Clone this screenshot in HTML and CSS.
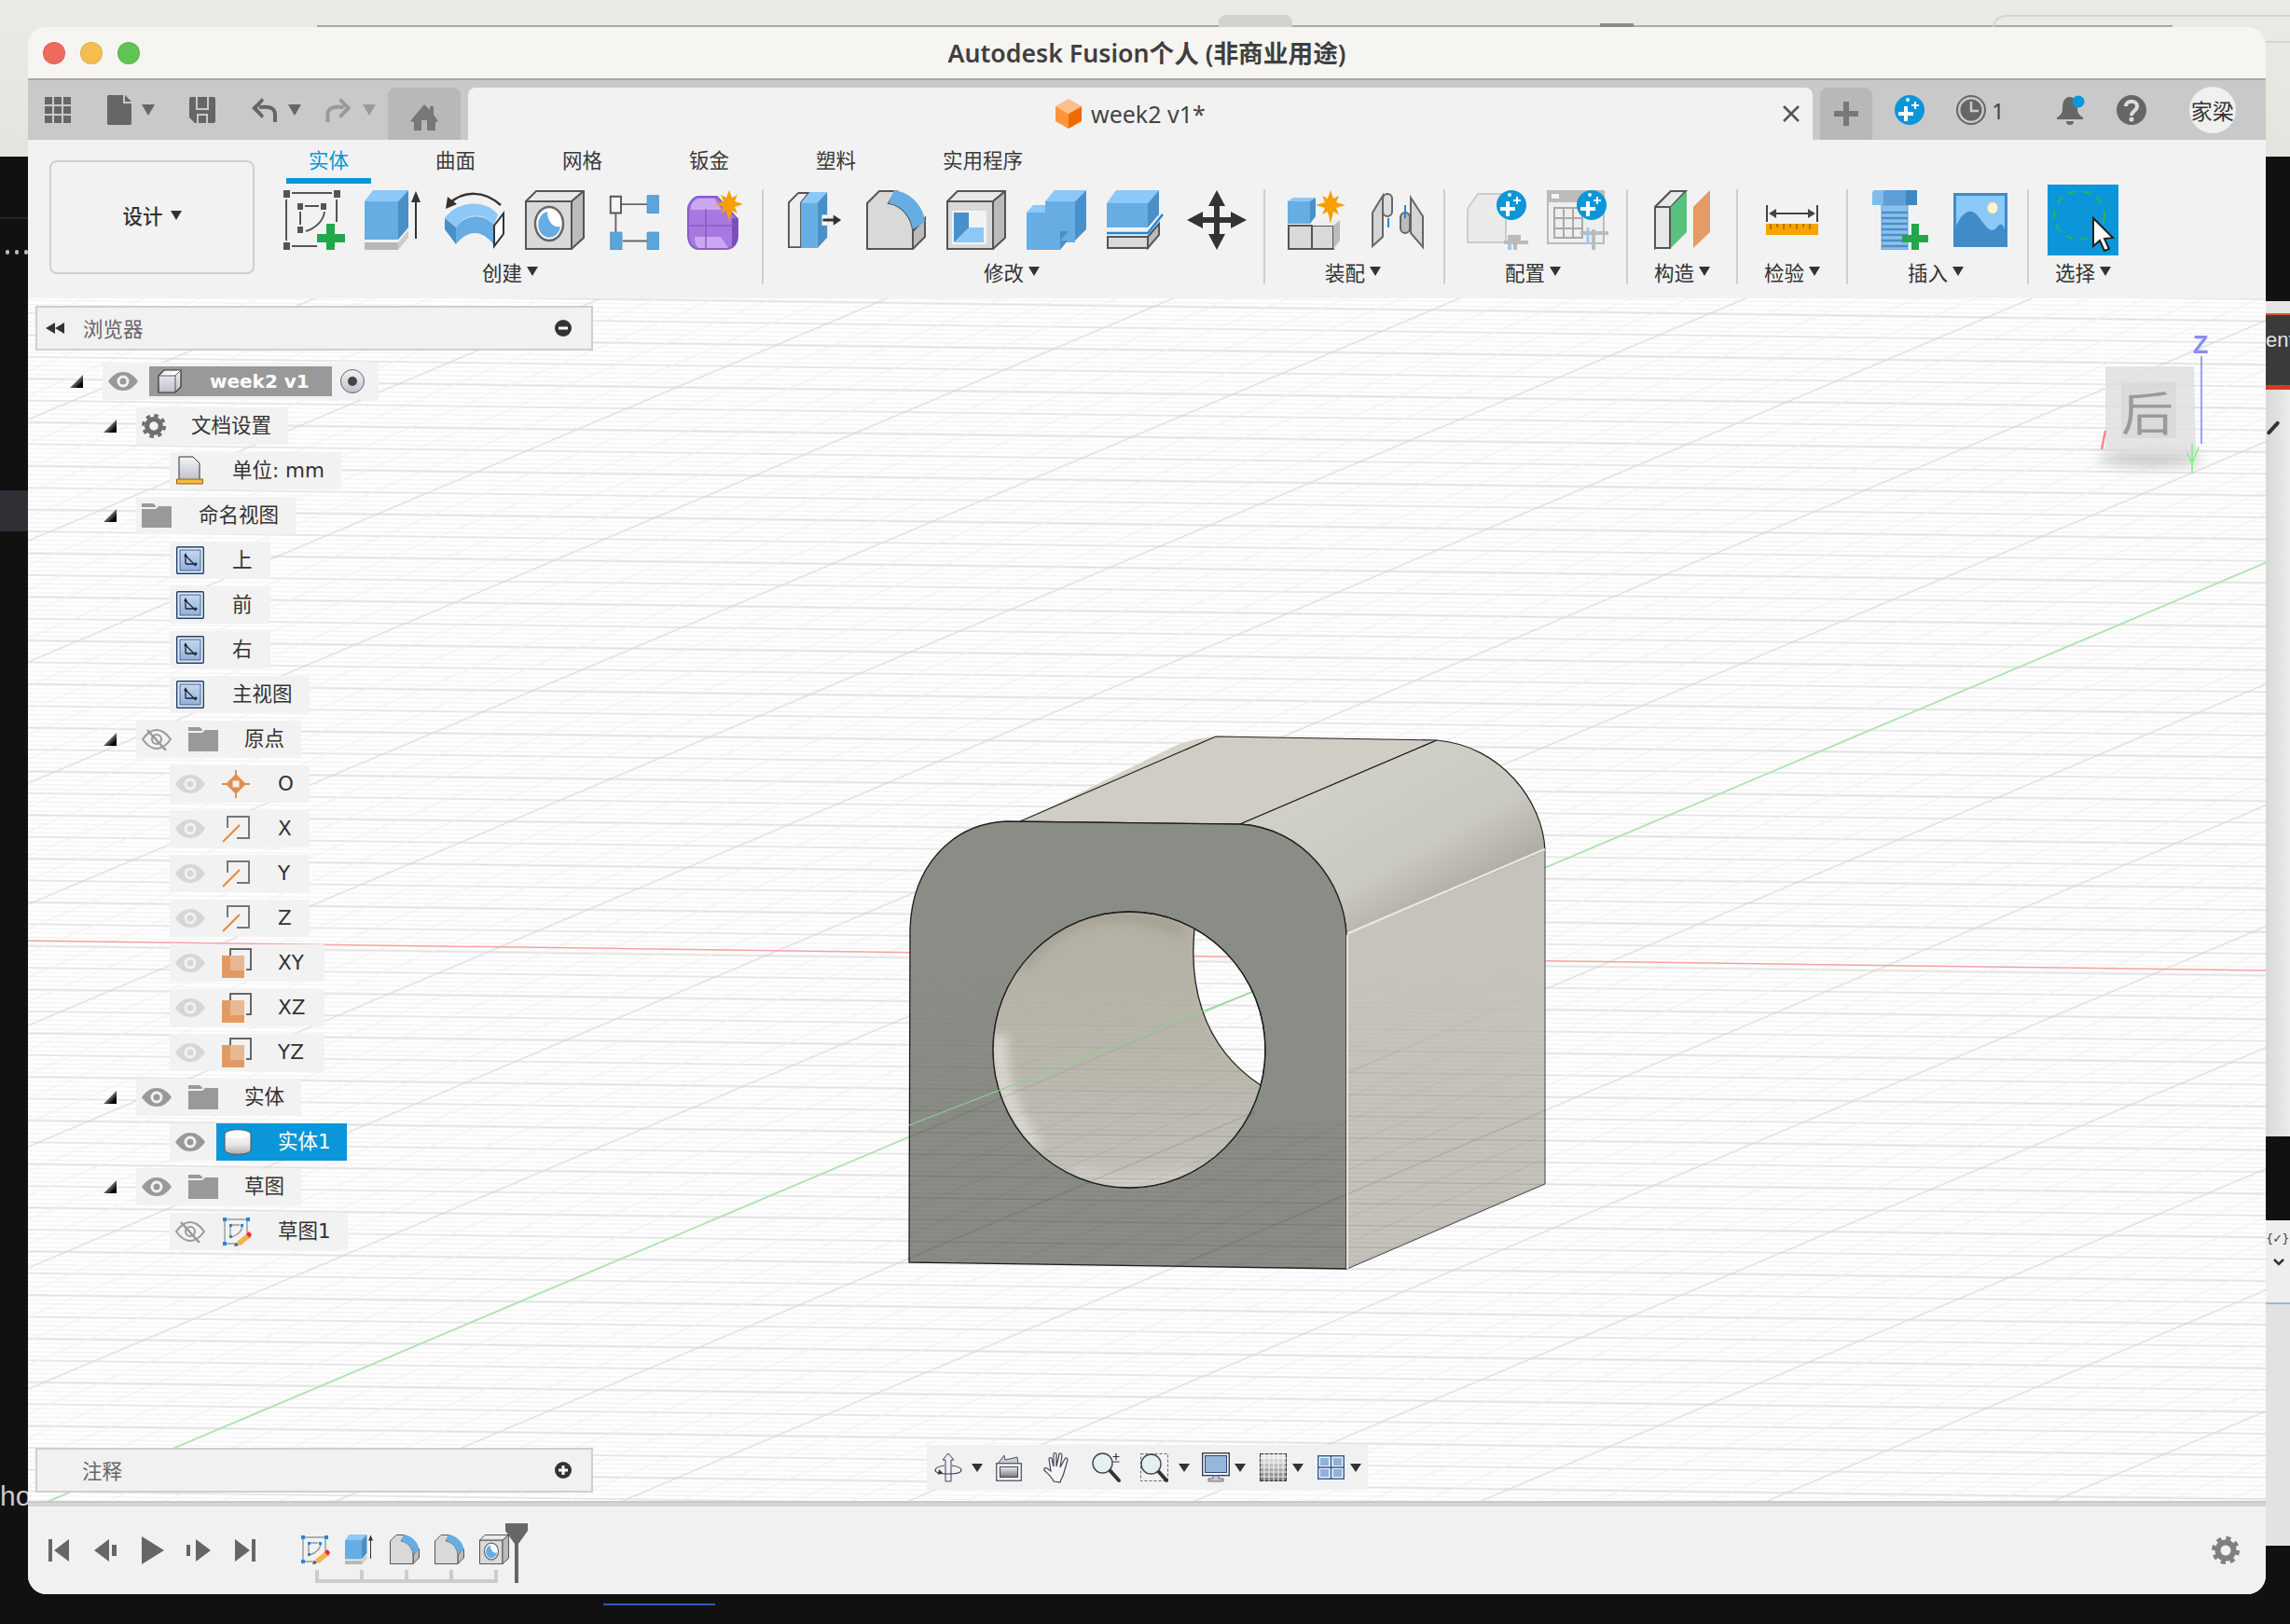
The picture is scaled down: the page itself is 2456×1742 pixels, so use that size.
FILE: index.html
```html
<!DOCTYPE html>
<html lang="zh">
<head>
<meta charset="utf-8">
<title>Autodesk Fusion</title>
<link rel="stylesheet" href="styles.css">
</head>
<body>
<svg class="sprite" width="0" height="0">
<defs>
<linearGradient id="gMetal" x1="0" y1="0" x2="0" y2="1"><stop offset="0" stop-color="#f4f5f8"/><stop offset="1" stop-color="#bcc0ca"/></linearGradient>
<linearGradient id="gBlueTile" x1="0" y1="0" x2="0" y2="1"><stop offset="0" stop-color="#c6d8ee"/><stop offset="1" stop-color="#8fb2dc"/></linearGradient>
<linearGradient id="gDark" x1="0" y1="0" x2="0" y2="1"><stop offset="0" stop-color="#eee"/><stop offset="1" stop-color="#777"/></linearGradient>
<linearGradient id="gCyl" x1="0" y1="0" x2="0" y2="1"><stop offset="0" stop-color="#fff"/><stop offset=".6" stop-color="#e8e8e8"/><stop offset="1" stop-color="#aaa"/></linearGradient>
</defs>
<symbol id="i-sketch" viewBox="0 0 66 64"><g fill="#555"><rect width="7" height="8"/><rect x="54" width="7" height="8"/><rect y="56" width="7" height="8"/><rect x="15" y="14" width="6" height="7"/><rect x="40" y="14" width="6" height="7"/><rect x="15" y="39" width="6" height="7"/></g><path fill="none" stroke="#555" stroke-width="2" d="M9 3H52M3 10V54M57 10V34M9 60H36M18 23V37M23 17H38M44 23C43 33 34 41 24 44"/><path fill="#21a84b" d="M46 36h9v11h11v9H55v8h-9v-8H36v-9h10z"/></symbol>
<symbol id="i-extrude" viewBox="0 0 64 64"><path fill="#66ade3" d="M0 12h36v41H0z"/><path fill="#8cc8f8" d="M0 12 9 0h38L36 12z"/><path fill="#4a90c8" d="M36 12 47 0v40L36 53z"/><path fill="#b8b8b8" d="M0 56h36v8H0z"/><path fill="#ccc" d="m36 56 11-13v8L36 64z"/><path stroke="#333" stroke-width="2" d="M55 10v42"/><path fill="#333" d="m50 13 5-12 5 12z"/></symbol>
<symbol id="i-revolve" viewBox="0 0 64 64"><path fill="none" stroke="#333" stroke-width="2.5" d="M4 15C20 0 42 0 60 16"/><path fill="#333" d="m1 20 2-13 10 8z"/><path fill="#8cc8f8" d="M0 30C14 10 44 10 57 26l-4 11C42 24 22 24 12 40z"/><path fill="#66ade3" d="M12 40C22 25 42 25 53 37v22C40 42 25 42 12 58z"/><path fill="#4a90c8" d="m0 30 12 10v18L0 42z"/><path fill="#fff" stroke="#333" stroke-width="2" d="m53 38 10-13v22L53 60z"/></symbol>
<symbol id="i-hole" viewBox="0 0 64 64"><path fill="#d9d9d9" stroke="#555" stroke-width="2" d="M1 12h49v51H1z"/><path fill="#e8e8e8" stroke="#555" stroke-width="2" d="M1 12 12 1h51L50 12z"/><path fill="#bbb" stroke="#555" stroke-width="2" d="M50 12 63 1v50L50 63z"/><ellipse cx="26" cy="36" rx="15" ry="18" fill="#fff" stroke="#666" stroke-width="2.5"/><path fill="#66ade3" d="M24 23a12 14 0 1 0 14 16c-8 2-14-6-14-16z"/></symbol>
<symbol id="i-form" viewBox="0 0 64 64"><path fill="none" stroke="#666" stroke-width="2" d="M16 14h30M10 24v22M18 56h28"/><path fill="#f4f4f4" stroke="#555" stroke-width="2" d="M4 5h12v19H4z"/><g fill="#5aa6dc" stroke="#4a90c8"><path d="M46 4h13v20H46zM4 46h13v20H4zM46 46h13v20H46z"/></g></symbol>
<symbol id="i-pform" viewBox="0 0 64 64"><path fill="#a678e0" stroke="#8a5cc8" stroke-width="2" d="M3 20c0-5 6-13 11-13h20l22 24v18c0 8-5 14-13 14H14C7 63 3 56 3 49z"/><path fill="#c9a8f0" d="M6 18c1-5 5-9 9-9h16l8 12H6zM10 50h28l8 12H15c-3 0-5-6-5-12z"/><path fill="#7a50b8" d="M50 30h6v20c0 6-3 10-6 12z"/><path fill="none" stroke="#8a5cc8" stroke-width="1.5" d="M4 38h48M22 20v42"/><path fill="#f5a000" d="m47 0 3 8 6-3-3 7 9 3-9 3 3 7-6-3-3 12-3-12-6 3 3-7-9-3 9-3-3-7 6 3z"/></symbol>
<symbol id="i-press" viewBox="0 0 64 64"><path fill="#eee" stroke="#555" stroke-width="2" d="M1 63V12L12 1h12l-9 11v51z"/><path fill="#66ade3" d="M15 12h19v52H15z"/><path fill="#8cc8f8" d="M15 12 25 0h20L34 12z"/><path fill="#4a90c8" d="M34 12 45 0v52L34 64z"/><path fill="#fff" d="M39 26h6v12h-6z"/><path stroke="#333" stroke-width="3" d="M40 32h15"/><path fill="#333" d="m52 26 9 6-9 6z"/></symbol>
<symbol id="i-fillet" viewBox="0 0 64 64"><path fill="#bbb" stroke="#555" stroke-width="2" d="m50 44 13-14v20L50 63z"/><path fill="#d9d9d9" stroke="#555" stroke-width="2" d="M1 63V14L14 1h18l-8 13c14 2 24 14 26 28v21z"/><path fill="#66ade3" d="M30 0c18 2 32 18 33 34L50 42C48 28 38 16 24 14z"/></symbol>
<symbol id="i-shell" viewBox="0 0 64 64"><path fill="#d9d9d9" stroke="#555" stroke-width="2" d="M1 12h49v51H1z"/><path fill="#e8e8e8" stroke="#555" stroke-width="2" d="M1 12 12 1h51L50 12z"/><path fill="#bbb" stroke="#555" stroke-width="2" d="M50 12 63 1v50L50 63z"/><path fill="#f2f2f2" d="M6 22h37v36H6z"/><path fill="#4a90c8" d="M8 24h16v22L8 56z"/><path fill="#8cc8f8" d="m8 56 16-16h16v16z"/></symbol>
<symbol id="i-combine" viewBox="0 0 64 64"><path fill="#66ade3" d="M20 12h32v44H20z"/><path fill="#8cc8f8" d="M20 12 30 0h34L52 12z"/><path fill="#4a90c8" d="M52 12 64 0v42L52 54z"/><path fill="#66ade3" d="M0 24h36v40H0z"/><path fill="#8cc8f8" d="m0 24 7-8h13v8z"/><path fill="#4a90c8" d="m36 54 9-10H36zM36 64V54h8z"/></symbol>
<symbol id="i-offset" viewBox="0 0 64 64"><path fill="#66ade3" d="M0 14h44v26H0z"/><path fill="#8cc8f8" d="M0 14 10 0h46L44 14z"/><path fill="#4a90c8" d="M44 14 56 0v26L44 40z"/><path fill="#d9d9d9" stroke="#555" stroke-width="2" d="M1 50h43v12H1z"/><path fill="#bbb" stroke="#555" stroke-width="2" d="M44 50 56 36v12L44 62z"/><path fill="none" stroke="#1e88e0" stroke-width="2.5" d="M-4 46h48l16-20"/></symbol>
<symbol id="i-move" viewBox="0 0 64 64"><path fill="#333" d="M32 0 41 17H35V29H47V23L64 32 47 41V35H35V47H41L32 64 23 47H29V35H17V41L0 32 17 23V29H29V17H23z"/></symbol>
<symbol id="i-newcomp" viewBox="0 0 64 64"><path fill="#66ade3" d="M0 12h24v24H0z"/><path fill="#8cc8f8" d="M0 12 6 8h24l-6 4z"/><path fill="#4a90c8" d="m24 12 6-4v20l-6 8z"/><path fill="#d9d9d9" stroke="#555" stroke-width="2" d="M1 38h25v25H1zM26 38h23v25H26z"/><path fill="#bbb" d="m49 38 7-6v22l-7 9z"/><path fill="#eee" d="m26 38 8-6h22l-7 6z"/><path fill="#f5a000" d="m46 0 3 9 6-3-3 7 10 3-10 3 3 7-6-3-3 13-3-13-6 3 3-7-10-3 10-3-3-7 6 3z"/></symbol>
<symbol id="i-joint" viewBox="0 0 56 64"><path fill="#d5d5d5" stroke="#666" stroke-width="2" d="m1 50 0-26L12 6v44L1 60z"/><path fill="#d5d5d5" stroke="#666" stroke-width="2" d="M42 8 55 28v33L42 46z"/><rect x="12" y="4" width="10" height="24" rx="5" fill="#ddd" stroke="#666" stroke-width="2"/><rect x="31" y="24" width="10" height="22" rx="5" fill="#bbb" stroke="#666" stroke-width="2"/><path stroke="#1e88e0" stroke-width="2" d="M18 30v10M36 16v14"/></symbol>
<symbol id="i-spark" viewBox="0 0 32 32"><circle cx="16" cy="16" r="16" fill="#0a96d8"/><path fill="#fff" d="M10 12h4v6h6v4h-6v6h-4v-6H4v-4h6z"/><path fill="#fff" d="M21 7h2v3h3v2h-3v3h-2v-3h-3v-2h3z"/><circle cx="14" cy="5" r="2" fill="#fff"/></symbol>
<symbol id="i-config1" viewBox="0 0 66 64"><path fill="#eaeaea" stroke="#ccc" stroke-width="2" d="M1 20 12 4h30v52H1z"/><rect x="44" y="48" width="14" height="6" fill="#bbb"/><rect x="44" y="56" width="4" height="8" fill="#9cc9ef"/><path stroke="#bbb" stroke-width="4" d="M40 56h26M52 50v14"/><use href="#i-spark" x="32" y="0" width="32" height="32"/></symbol>
<symbol id="i-config2" viewBox="0 0 66 64"><path fill="#eee" stroke="#bbb" stroke-width="2" d="M1 1h60v56H1z"/><path fill="#bbb" d="M1 1h60v12H1z"/><path fill="#f4f4f4" d="M5 4h8v5H5z"/><path fill="none" stroke="#aaa" stroke-width="2" d="M8 19h30v32H8zM8 30h30M8 41h30M18 19v32M28 19v32"/><path stroke="#bbb" stroke-width="4" d="M36 46h30M50 42v22"/><path stroke="#9cc9ef" stroke-width="3" d="M44 40v18"/><use href="#i-spark" x="32" y="0" width="32" height="32"/></symbol>
<symbol id="i-plane" viewBox="0 0 60 64"><path fill="#d9d9d9" stroke="#555" stroke-width="2" d="M1 62V18L18 1v44z"/><path fill="#e8e8e8" stroke="#555" stroke-width="2" d="M1 18 18 1h16L18 18zM1 62h16V18H1z"/><path fill="#58c27d" d="M18 18 35 1v44L18 62z"/><path fill="#e69a66" d="M42 40V18L60 0v45L42 62z"/></symbol>
<symbol id="i-measure" viewBox="0 0 56 38"><path fill="none" stroke="#444" stroke-width="2" d="M1 0v18M55 0v18M6 9h44"/><path fill="#444" d="m3 9 8-5v10zM53 9l-8-5v10z"/><path fill="#f5a400" d="M0 20h56v12H0z"/><path stroke="#a06800" stroke-width="1.5" d="M5 20v6M12 20v4M19 20v6M26 20v4M33 20v6M40 20v4M47 20v6"/></symbol>
<symbol id="i-bolt" viewBox="0 0 60 64"><path fill="#5d9fd8" d="M0 4q0-4 4-4h44l0 16H0z"/><path fill="#82bbec" d="M0 4q0-4 4-4h8v16H0z"/><path fill="#3f86c2" d="M36 0h12v16H36z"/><path fill="#8cc0ea" stroke="#5d9fd8" stroke-width="1" d="M10 16h28v48H10z"/><path stroke="#4a90c8" stroke-width="2.5" d="M10 24h28M10 30h28M10 36h28M10 42h28M10 48h28M10 54h28M10 60h28"/><path fill="#21a84b" d="M42 36h8v12h10v8H50v8h-8v-8H32v-8h10z"/></symbol>
<symbol id="i-image" viewBox="0 0 58 58"><path fill="#3f8cc8" d="M0 0h58v58H0z"/><path fill="#8cc8f8" d="M3 3h52v52H3z"/><ellipse cx="42" cy="16" rx="6" ry="6.5" fill="#fff6c8" stroke="#9cc7e8"/><path fill="#3f8cc8" d="M2 56V38c4-12 12-20 18-18 8 2 14 20 22 20 4 0 6-8 10-6 3 2 4 8 4 14v8z"/></symbol>
<symbol id="i-select" viewBox="0 0 76 76"><path fill="#0a96d8" d="M0 0h76v76H0z"/><ellipse cx="34" cy="33" rx="27" ry="26" fill="none" stroke="#2db45a" stroke-width="2" stroke-dasharray="9 7"/><path fill="#fff" stroke="#222" stroke-width="2" d="m49 36 0 30 7-6 5 11 5-2-5-11 9-1z"/></symbol>
<symbol id="i-eye" viewBox="0 0 32 20"><path fill="currentColor" d="M0 10C5 3 10 0 16 0s11 3 16 10c-5 7-10 10-16 10S5 17 0 10z"/><circle cx="16" cy="10" r="6.5" fill="#f2f2f2"/><circle cx="16" cy="10" r="3.5" fill="currentColor"/></symbol>
<symbol id="i-eyeoff" viewBox="0 0 32 24"><path fill="none" stroke="currentColor" stroke-width="2" d="M1 12C6 5 11 2 16 2s10 3 15 10c-5 7-10 10-15 10S6 19 1 12z"/><circle cx="16" cy="12" r="5" fill="none" stroke="currentColor" stroke-width="2"/><path stroke="currentColor" stroke-width="2.5" d="m6 2 20 22"/></symbol>
<symbol id="i-folder" viewBox="0 0 32 26"><path fill="#999" d="M0 4V0h12l3 2.500V4zM0 6h15l3-3h14v23H0z"/></symbol>
<symbol id="i-view" viewBox="0 0 30 30"><rect x=".7" y=".7" width="28.600" height="28.600" rx="1" fill="#e8eef8" stroke="#24406c" stroke-width="1.400"/><rect x="4" y="4" width="22" height="22" fill="url(#gBlueTile)" stroke="#44638f"/><path fill="none" stroke="#223" stroke-width="1.300" d="m10 10 0 9M10 19h12M10 10l11 11"/><path fill="#223" d="m8 11 2-4 2 4zM20 17l3 2-3 2z"/></symbol>
<symbol id="i-origin" viewBox="0 0 30 30"><path stroke="#e08f52" stroke-width="2" d="M15 0v30M0 15h30"/><path fill="#e08f52" d="m15 4 11 11-11 11L4 15z"/><rect x="11.500" y="11.500" width="7" height="7" fill="#f6efe9"/></symbol>
<symbol id="i-axis" viewBox="0 0 30 30"><path fill="none" stroke="#777" stroke-width="2" d="M6 14V2h23v23H16"/><path stroke="#e8883c" stroke-width="2" d="m1 29 18-18"/></symbol>
<symbol id="i-planeT" viewBox="0 0 32 32"><path fill="none" stroke="#666" stroke-width="2" d="M9 8V1h22v22h-5"/><path fill="#e29a62" d="M0 8h24v24H0z"/><path fill="#e6b893" d="M9 8h15v16H9z"/></symbol>
<symbol id="i-cylinder" viewBox="0 0 30 28"><path fill="url(#gCyl)" stroke="#555" d="M1 6c0-7 28-7 28 0v16c0 7-28 7-28 0z"/><ellipse cx="15" cy="6" rx="13" ry="4" fill="#fff"/></symbol>
<symbol id="i-sketchpen" viewBox="0 0 32 32"><path fill="none" stroke="#999" stroke-width="1.400" d="M3 3h25M3 3v26h16M27 3v16M9 9h10M9 9v12M22 9c0 6-5 11-12 13"/><g fill="#1e88e0"><rect x="1" y="1" width="4" height="4"/><rect x="26" y="1" width="4" height="4"/><rect x="1" y="27" width="4" height="4"/><rect x="8" y="8" width="3" height="3"/><rect x="20" y="8" width="3" height="3"/><rect x="8" y="20" width="3" height="3"/></g><path fill="#f4b24a" d="m27 18 4 4-11 9-4-4z"/><path fill="#e8303a" d="m26 19 3-3 3 3-2 4z"/><path fill="#555" d="m15 28 3 3-5 1z"/></symbol>
<symbol id="i-gear" viewBox="0 0 30 30"><circle cx="15" cy="15" r="8.500" fill="none" stroke="currentColor" stroke-width="6"/><circle cx="15" cy="15" r="13" fill="none" stroke="currentColor" stroke-width="4" stroke-dasharray="5.200 5"/></symbol>
<symbol id="i-fwd" viewBox="0 0 24 30"><path fill="#666" d="M0 0 24 15 0 30z"/></symbol>
</svg>

<div class="desk-top"></div>
<div class="desk-other"></div>
<div class="desk-bump"></div>
<div class="desk-mark"></div>
<div class="desk-outline"></div>
<div class="left-line"></div>
<div class="left-hi"></div>
<div class="left-dots"><i></i><i></i><i></i></div>
<div class="left-ho">ho</div>
<div class="blue-line"></div>
<div class="right-dark-tab"><span class="ent">ent</span></div>
<div class="right-panel"><i class="slash"></i></div>
<div class="right-panel2"><span class="curly">{✓}</span><svg class="chev" width="12" height="8" viewBox="0 0 12 8"><path fill="none" stroke="#333" stroke-width="2.500" d="m1 1 5 5 5-5"/></svg></div>

<main class="window">
  <header class="titlebar">
    <div class="lights"><i class="tl red"></i><i class="tl amber"></i><i class="tl green"></i></div>
    <h1 class="title">Autodesk Fusion个人 (非商业用途)</h1>
    <div></div>
  </header>

  <nav class="tabbar">
    <svg class="m18" width="28" height="28" viewBox="0 0 28 28"><path fill="#666" d="M0 0h8v8H0zM10 0h8v8h-8zM20 0h8v8h-8zM0 10h8v8H0zM10 10h8v8h-8zM20 10h8v8h-8zM0 20h8v8H0zM10 20h8v8h-8zM20 20h8v8h-8z"/></svg>
    <svg class="m39" width="26" height="32" viewBox="0 0 26 32"><path fill="#666" d="M1 0h16v9h9v22l-1 1H1l-1-1V1zM19 0l7 7h-7z"/></svg>
    <i class="caret cq m11"></i>
    <svg class="m37" width="28" height="28" viewBox="0 0 28 28"><path fill="#666" d="M2 0h24q2 0 2 2v24q0 2-2 2H6l-6-6V2q0-2 2-2z"/><path fill="none" stroke="#c9c9c9" stroke-width="2" d="M8 0v13h12V0M9 28V19h10v9"/></svg>
    <svg class="m39" width="27" height="26" viewBox="0 0 27 26"><path fill="none" stroke="#666" stroke-width="4" d="M25 26V18C25 10 18 9 8 10"/><path fill="#666" d="M11 0 0 11l11 11 2-3-7-8 7-8z"/></svg>
    <i class="caret cq m12"></i>
    <svg class="m26" width="28" height="26" viewBox="0 0 27 26"><path fill="none" stroke="#999" stroke-width="4" d="M2 26V18C2 10 9 9 19 10"/><path fill="#999" d="M16 0l11 11-11 11-2-3 7-8-7-8z"/></svg>
    <i class="caret cq cq-dim m12"></i>
    <div class="tab-home m13"><svg width="30" height="28" viewBox="0 0 30 28"><path fill="#777" d="M15 0l6 6V2h4v9l5 7-3 1v9H18V17h-6v11H4v-9l-4-1z"/></svg></div>
    <div class="tab-file m8">
      <svg width="28" height="32" viewBox="0 0 28 32"><path fill="#ffbe8c" d="M14 0 28 8 14 16 0 8z"/><path fill="#ff9438" d="M0 8l14 8v16L0 24z"/><path fill="#f06a00" d="m28 8-14 8v16l14-8z"/></svg>
      <span class="tab-name">week2 v1*</span>
      <svg class="tab-close" width="18" height="18" viewBox="0 0 18 18"><path stroke="#555" stroke-width="2.500" d="m1 1 16 16M17 1 1 17"/></svg>
    </div>
    <div class="tab-plus m8"><svg width="26" height="26" viewBox="0 0 26 26"><path fill="#777" d="M10 0h6v10h10v6H16v10h-6V16H0v-6h10z"/></svg></div>
    <svg class="m24" width="32" height="32"><use href="#i-spark"/></svg>
    <svg class="m34" width="32" height="32" viewBox="0 0 32 32"><circle cx="16" cy="16" r="15" fill="#c9c9c9" stroke="#666" stroke-width="2"/><circle cx="16" cy="16" r="11.500" fill="#666"/><path fill="none" stroke="#ccc" stroke-width="2.500" d="M16 7v10h8"/></svg>
    <span class="hist">1</span>
    <svg class="m56" width="28" height="32" viewBox="0 0 28 32"><path fill="#666" d="M14 2c6 0 8 6 8 12 0 5 2 8 6 10v2H0v-2c4-2 6-5 6-10 0-6 2-12 8-12zM10 28h8c0 3-2 4-4 4s-4-1-4-4z"/><circle cx="23" cy="7" r="6.500" fill="#0a96d8"/></svg>
    <svg class="m36" width="32" height="32" viewBox="0 0 32 32"><circle cx="16" cy="16" r="16" fill="#666"/><path fill="none" stroke="#ddd" stroke-width="4" d="M10 12c0-7 12-7 12 0 0 5-6 5-6 10"/><circle cx="16" cy="26" r="2.500" fill="#ddd"/></svg>
    <div class="avatar m46">家梁</div>
  </nav>

  <section class="ribbon">
    <div class="design"><span>设计</span><i class="caret c-lg"></i></div>
    <div class="ribbon-main">
      <div class="tabs">
        <span class="rtab on">实体</span><span class="rtab">曲面</span><span class="rtab">网格</span><span class="rtab">钣金</span><span class="rtab">塑料</span><span class="rtab">实用程序</span>
      </div>
      <div class="groups">
        <div class="group g1"><div class="tools">
          <span class="tool"><svg width="66" height="64"><use href="#i-sketch"/></svg></span>
          <span class="tool"><svg width="64" height="64"><use href="#i-extrude"/></svg></span>
          <span class="tool"><svg width="64" height="64"><use href="#i-revolve"/></svg></span>
          <span class="tool"><svg width="64" height="64"><use href="#i-hole"/></svg></span>
          <span class="tool"><svg width="60" height="64"><use href="#i-form"/></svg></span>
          <span class="tool"><svg width="64" height="64"><use href="#i-pform"/></svg></span>
        </div><div class="glabel shift">创建<i class="caret"></i></div></div>
        <div class="group g2"><div class="tools">
          <span class="tool"><svg width="60" height="64"><use href="#i-press"/></svg></span>
          <span class="tool"><svg width="64" height="64"><use href="#i-fillet"/></svg></span>
          <span class="tool"><svg width="64" height="64"><use href="#i-shell"/></svg></span>
          <span class="tool"><svg width="64" height="64"><use href="#i-combine"/></svg></span>
          <span class="tool"><svg width="64" height="64"><use href="#i-offset"/></svg></span>
          <span class="tool"><svg width="64" height="64"><use href="#i-move"/></svg></span>
        </div><div class="glabel shift">修改<i class="caret"></i></div></div>
        <div class="group g3"><div class="tools">
          <span class="tool"><svg width="64" height="64"><use href="#i-newcomp"/></svg></span>
          <span class="tool"><svg width="56" height="64"><use href="#i-joint"/></svg></span>
        </div><div class="glabel shift">装配<i class="caret"></i></div></div>
        <div class="group g4"><div class="tools">
          <span class="tool"><svg width="66" height="64"><use href="#i-config1"/></svg></span>
          <span class="tool"><svg width="66" height="64"><use href="#i-config2"/></svg></span>
        </div><div class="glabel shift">配置<i class="caret"></i></div></div>
        <div class="group g5"><div class="tools">
          <span class="tool"><svg width="60" height="64"><use href="#i-plane"/></svg></span>
        </div><div class="glabel">构造<i class="caret"></i></div></div>
        <div class="group g6"><div class="tools">
          <span class="tool tool-measure"><svg width="56" height="38"><use href="#i-measure"/></svg></span>
        </div><div class="glabel">检验<i class="caret"></i></div></div>
        <div class="group g7"><div class="tools">
          <span class="tool"><svg width="60" height="64"><use href="#i-bolt"/></svg></span>
          <span class="tool tool-image"><svg width="58" height="58"><use href="#i-image"/></svg></span>
        </div><div class="glabel shift">插入<i class="caret"></i></div></div>
        <div class="group g8"><div class="tools">
          <span class="tool tool-select"><svg width="76" height="76"><use href="#i-select"/></svg></span>
        </div><div class="glabel">选择<i class="caret"></i></div></div>
      </div>
    </div>
  </section>

  <section class="viewport">
    <svg class="scene" viewBox="30 320 2400 1290" width="2400" height="1290">
      <defs>
        <pattern id="pH" patternUnits="userSpaceOnUse" width="200" height="46.800" patternTransform="rotate(0.76)">
          <rect width="200" height="46.800" fill="#fff"/>
          <g stroke="#f2f2f2" stroke-width="1.200"><path d="M0 12.700h200M0 17.400h200M0 22.100h200M0 26.800h200M0 36.100h200M0 40.800h200M0 45.500h200M0 3.400h200"/></g>
          <path stroke="#cfcfcf" stroke-width="1" d="M0 8h200"/><path stroke="#e0e0e0" stroke-width="2" d="M0 31.400h200"/>
        </pattern>
        <pattern id="pD" patternUnits="userSpaceOnUse" width="300" height="119.700" patternTransform="rotate(-22.950)">
          <g stroke="#f0f0f0" stroke-width="1"><path d="M0 19.300h300M0 43.300h300M0 91.100h300M0 115.100h300"/></g>
          <path stroke="#d2d2d2" stroke-width="1" d="M0 67.200h300"/>
        </pattern>
        <pattern id="pT" patternUnits="userSpaceOnUse" width="200" height="23.400" patternTransform="rotate(0.76)">
          <g stroke="#666" stroke-width="1" opacity=".25"><path d="M0 3.300h200M0 12.700h200M0 17.400h200M0 22.100h200"/></g>
          <path stroke="#333" stroke-width="1" opacity=".5" d="M0 8h200"/>
        </pattern>
        <pattern id="pTD" patternUnits="userSpaceOnUse" width="300" height="119.700" patternTransform="rotate(-22.950)">
          <g stroke="#555" stroke-width="1" opacity=".25"><path d="M0 19.300h300M0 43.300h300M0 91.100h300M0 115.100h300"/></g>
          <path stroke="#333" stroke-width="1" opacity=".5" d="M0 67.200h300"/>
        </pattern>
        <clipPath id="holeClip"><ellipse cx="1211" cy="1126" rx="146" ry="148"/></clipPath>
        <linearGradient id="curveG" gradientUnits="userSpaceOnUse" x1="1500" y1="800" x2="1590" y2="960"><stop offset="0" stop-color="#d0cfc8"/><stop offset=".6" stop-color="#c9c8c1"/><stop offset="1" stop-color="#aaa89c"/></linearGradient>
        <linearGradient id="insideG" x1="0" y1="0" x2="0" y2="1"><stop offset="0" stop-color="#b3b0a2"/><stop offset=".5" stop-color="#b9b7ab"/><stop offset="1" stop-color="#c4c3bc"/></linearGradient>
        <linearGradient id="thruG" gradientUnits="userSpaceOnUse" x1="0" y1="1040" x2="0" y2="1220"><stop offset="0" stop-color="#000"/><stop offset="1" stop-color="#fff"/></linearGradient>
        <mask id="thruMask" maskUnits="userSpaceOnUse" x="900" y="760" width="800" height="620"><rect x="900" y="760" width="800" height="620" fill="url(#thruG)"/></mask>
        <filter id="cubeShadow" x="-30%" y="-100%" width="160%" height="300%"><feGaussianBlur stdDeviation="7"/></filter>
        <filter id="soft" x="-40%" y="-40%" width="180%" height="180%"><feGaussianBlur stdDeviation="6"/></filter>
      </defs>
      <rect x="30" y="320" width="2400" height="1290" fill="url(#pH)"/>
      <rect x="30" y="320" width="2400" height="1290" fill="url(#pD)"/>
      <path stroke="#f5a3a3" stroke-width="1.500" d="M30 1009 2430 1041"/>
      <path stroke="#a6e8a6" stroke-width="1.500" d="M50 1611 2430 603.500"/>
      <path fill="#d6d4ca" d="M1098 880 1256 802q24-11 48-12l-6 20-180 74z"/>
      <path fill="#cfcdc4" stroke="#222" stroke-width="1.200" d="M1094 881 1304 790 1541 794 1330 884z"/>
      <path fill="url(#curveG)" stroke="#222" stroke-width="1.200" d="M1330 884 1541 794C1610 800 1655 860 1657 912L1444 1003C1442 950 1400 888 1330 884z"/>
      <path fill="#c5c3bb" d="M1444 1003 1657 913V1270L1445 1361z"/>
      <path stroke="#e7e6e2" stroke-width="2.500" d="M1444 1002 1657 911"/>
      <path fill="none" stroke="#444" stroke-width="1" d="M1657 913V1270L1445 1361"/>
      <path fill="#8a8c86" fill-rule="evenodd" stroke="#1f1f1f" stroke-width="1.300" d="M975 1354 976 997C978 930 1020 884 1079 881L1330 884C1396 888 1442 945 1444 1003V1361zM1065 1126A146 148 0 1 0 1357 1126 146 148 0 1 0 1065 1126z"/>
      <g clip-path="url(#holeClip)">
        <path fill="url(#insideG)" d="M1281 997C1276 1050 1285 1120 1352 1164A146 148 0 1 1 1281 997z"/>
        <g filter="url(#soft)">
          <path fill="none" stroke="#a09d90" stroke-width="12" opacity=".8" d="M1095 1040C1120 1005 1145 990 1170 985"/>
          <path fill="none" stroke="#dedcd5" stroke-width="18" opacity=".9" d="M1072 1110C1068 1160 1085 1200 1112 1232"/>
          <path fill="none" stroke="#d6d4cd" stroke-width="12" opacity=".85" d="M1150 1256C1190 1272 1240 1272 1275 1256"/>
          <path fill="none" stroke="#8e8c80" stroke-width="10" opacity=".5" d="M1170 985C1200 978 1240 985 1270 1000"/>
        </g>
        <path fill="none" stroke="#1f1f1f" stroke-width="1.300" d="M1281 997C1276 1050 1285 1120 1352 1164"/>
      </g>
      <g mask="url(#thruMask)" class="thru">
        <path fill="url(#pT)" d="M975 1354 976 1040H1281C1278 1100 1300 1130 1352 1164A146 148 0 0 1 1340 1210L1444 1200V1003L1657 913V1270L1445 1361z"/>
        <path fill="url(#pTD)" d="M975 1354 976 1040H1281C1278 1100 1300 1130 1352 1164A146 148 0 0 1 1340 1210L1444 1200V1003L1657 913V1270L1445 1361z"/>
      </g>
      <ellipse cx="1211" cy="1126" rx="146" ry="148" fill="none" stroke="#1f1f1f" stroke-width="1.300"/>
      <path stroke="#8fd08f" stroke-width="1.200" d="M975 1207 1342 1064.500"/>
      <path stroke="#e7e6e2" stroke-width="2" d="M1445 1003V1361"/>
      <g>
        <ellipse cx="2306" cy="492" rx="56" ry="9" fill="#999" opacity=".5" filter="url(#cubeShadow)"/>
        <path fill="#dedede" opacity=".8" d="M2258 393H2353L2355 488 2258 482z"/>
        <rect x="2275" y="410" width="59" height="60" fill="#d4d4d4" opacity=".55"/>
        <text class="cube-text" x="2303" y="462" textLength="56" lengthAdjust="spacingAndGlyphs">后</text>
        <path stroke="#7d7dff" stroke-width="1.500" d="M2361 382V476"/>
        <path fill="none" stroke="#7cf07c" stroke-width="1.500" d="M2351 476V508M2346 486 2351 497 2358 480"/>
        <path stroke="#f28a8a" stroke-width="2.500" d="M2258 462 2254 482"/>
        <text class="axis-z" x="2360" y="379">Z</text>
      </g>
    </svg>

    <aside class="left">
      <div class="panel">
        <svg width="20" height="12" viewBox="0 0 20 12"><path fill="#333" d="M0 6l10-6v12zM10 6l10-6v12z"/></svg>
        <span class="panel-t">浏览器</span>
        <svg class="pc" width="18" height="18" viewBox="0 0 18 18"><circle cx="9" cy="9" r="9" fill="#333"/><path fill="#fff" d="M4 7.500h10v3H4z"/></svg>
      </div>
      <div class="tree">
        <div class="row l0"><i class="tw"></i><div class="pill p-root">
          <svg class="eye on" width="32" height="20"><use href="#i-eye"/></svg>
          <div class="root-box"><svg width="26" height="26" viewBox="0 0 26 26"><path fill="url(#gMetal)" stroke="#333" stroke-width="1.200" d="M1 7 7 1h18v18l-6 6H1z"/><path fill="#fff" stroke="#333" stroke-width=".8" d="M1 7h18l6-6M19 7v18"/></svg><span class="root-t">week2 v1</span></div>
          <svg class="radio" width="26" height="26" viewBox="0 0 26 26"><circle cx="13" cy="13" r="12.500" fill="url(#gMetal)" stroke="#666"/><circle cx="13" cy="13" r="5" fill="#444"/></svg>
        </div></div>
        <div class="row l1"><i class="tw"></i><div class="pill"><svg class="gear" width="26" height="26"><use href="#i-gear"/></svg><span class="t t27">文档设置</span></div></div>
        <div class="row l2"><i class="tw none"></i><div class="pill p7"><svg width="29" height="32" viewBox="0 0 29 32"><path fill="url(#gMetal)" stroke="#333" d="M3 1h15l7 7v18H3z"/><path fill="#f5b83c" stroke="#8a6a10" d="M.5 25h28v5H.5z"/></svg><span class="t t31">单位: mm</span></div></div>
        <div class="row l1"><i class="tw"></i><div class="pill"><svg width="32" height="26"><use href="#i-folder"/></svg><span class="t t29">命名视图</span></div></div>
        <div class="row l2"><i class="tw none"></i><div class="pill p7 w108"><svg width="30" height="30"><use href="#i-view"/></svg><span class="t t30">上</span></div></div>
        <div class="row l2"><i class="tw none"></i><div class="pill p7 w108"><svg width="30" height="30"><use href="#i-view"/></svg><span class="t t30">前</span></div></div>
        <div class="row l2"><i class="tw none"></i><div class="pill p7 w108"><svg width="30" height="30"><use href="#i-view"/></svg><span class="t t30">右</span></div></div>
        <div class="row l2"><i class="tw none"></i><div class="pill p7"><svg width="30" height="30"><use href="#i-view"/></svg><span class="t t30">主视图</span></div></div>
        <div class="row l1"><i class="tw"></i><div class="pill"><svg class="eye" width="32" height="24"><use href="#i-eyeoff"/></svg><svg class="next" width="32" height="26"><use href="#i-folder"/></svg><span class="t t28">原点</span></div></div>
        <div class="row l2"><i class="tw none"></i><div class="pill w150"><svg class="eye dim" width="32" height="20"><use href="#i-eye"/></svg><svg class="next" width="30" height="30"><use href="#i-origin"/></svg><span class="t t30">O</span></div></div>
        <div class="row l2"><i class="tw none"></i><div class="pill w150"><svg class="eye dim" width="32" height="20"><use href="#i-eye"/></svg><svg class="next" width="30" height="30"><use href="#i-axis"/></svg><span class="t t30">X</span></div></div>
        <div class="row l2"><i class="tw none"></i><div class="pill w150"><svg class="eye dim" width="32" height="20"><use href="#i-eye"/></svg><svg class="next" width="30" height="30"><use href="#i-axis"/></svg><span class="t t30">Y</span></div></div>
        <div class="row l2"><i class="tw none"></i><div class="pill w150"><svg class="eye dim" width="32" height="20"><use href="#i-eye"/></svg><svg class="next" width="30" height="30"><use href="#i-axis"/></svg><span class="t t30">Z</span></div></div>
        <div class="row l2"><i class="tw none"></i><div class="pill w166"><svg class="eye dim" width="32" height="20"><use href="#i-eye"/></svg><svg class="next" width="32" height="32"><use href="#i-planeT"/></svg><span class="t t28">XY</span></div></div>
        <div class="row l2"><i class="tw none"></i><div class="pill w166"><svg class="eye dim" width="32" height="20"><use href="#i-eye"/></svg><svg class="next" width="32" height="32"><use href="#i-planeT"/></svg><span class="t t28">XZ</span></div></div>
        <div class="row l2"><i class="tw none"></i><div class="pill w166"><svg class="eye dim" width="32" height="20"><use href="#i-eye"/></svg><svg class="next" width="32" height="32"><use href="#i-planeT"/></svg><span class="t t28">YZ</span></div></div>
        <div class="row l1"><i class="tw"></i><div class="pill"><svg class="eye" width="32" height="20"><use href="#i-eye"/></svg><svg class="next" width="32" height="26"><use href="#i-folder"/></svg><span class="t t28">实体</span></div></div>
        <div class="row l2"><i class="tw none"></i><div class="pill p-sel"><svg class="eye" width="32" height="20"><use href="#i-eye"/></svg><div class="sel"><svg width="30" height="28"><use href="#i-cylinder"/></svg><span class="t t28 white">实体1</span></div></div></div>
        <div class="row l1"><i class="tw"></i><div class="pill"><svg class="eye" width="32" height="20"><use href="#i-eye"/></svg><svg class="next" width="32" height="26"><use href="#i-folder"/></svg><span class="t t28">草图</span></div></div>
        <div class="row l2"><i class="tw none"></i><div class="pill"><svg class="eye" width="32" height="24"><use href="#i-eyeoff"/></svg><svg class="next" width="32" height="32"><use href="#i-sketchpen"/></svg><span class="t t28">草图1</span></div></div>
      </div>
      <div class="panel">
        <span class="panel-t nomark">注释</span>
        <svg class="pc" width="18" height="18" viewBox="0 0 18 18"><circle cx="9" cy="9" r="9" fill="#333"/><path fill="#fff" d="M7.500 4h3v3.500H14v3h-3.500V14h-3v-3.500H4v-3h3.500z"/></svg>
      </div>
    </aside>

    <div class="navbar">
      <svg width="30" height="30" viewBox="0 0 30 30"><path fill="#eef0f4" stroke="#445" d="M15 0l6 7h-3v23h-6V7H9z"/><path fill="none" stroke="#445" stroke-width="1.200" d="M11 13C4 14 1 16 1 18c0 3 6 4 14 4s14-1 14-4c0-2-3-4-10-5"/><path fill="#333" d="M5 17l-1 6 5-2z"/></svg>
      <i class="caret cn m10"></i>
      <svg class="m14" width="28" height="30" viewBox="0 0 28 30"><path fill="#c8ccd2" stroke="#556" d="M2 11 9 2l1 5 13-3 1 7z"/><rect x=".7" y="10.700" width="26.600" height="18.600" fill="#f4f5f6" stroke="#556" stroke-width="1.300"/><rect x="4.500" y="14.500" width="19" height="11" fill="url(#gDark)" stroke="#445"/></svg>
      <svg class="m23" width="31" height="32" viewBox="0 0 31 32"><path fill="#f5f6f8" stroke="#445" stroke-width="1.200" d="M11 31C9 26 5 23 1 19c-1-2 1-3 3-2l4 3L6 7c0-2 3-2 3 0l2 8V2c0-2 3-2 3 0v13l3-13c0-2 3-1 3 1l-2 13 5-9c1-2 3-1 3 1l-4 14c-1 4-3 6-4 10z"/></svg>
      <svg class="m21" width="31" height="32" viewBox="0 0 31 32"><circle cx="11.500" cy="11.500" r="10.500" fill="#e2f0ee" stroke="#445" stroke-width="1.400"/><path stroke="#333" stroke-width="4" stroke-linecap="round" d="m20 20 9 10"/><path stroke="#333" stroke-width="1.200" d="M26 1v7M22.500 4.500h7M22.500 10h7"/></svg>
      <svg class="m21" width="30" height="32" viewBox="0 0 30 32"><rect x=".5" y="1.500" width="29" height="29" fill="none" stroke="#666" stroke-dasharray="3 2"/><circle cx="11.500" cy="12.500" r="10.500" fill="#e2f0ee" stroke="#445" stroke-width="1.400"/><path stroke="#333" stroke-width="4" stroke-linecap="round" d="m20 21 8 9"/></svg>
      <i class="caret cn m11"></i>
      <svg class="m13" width="30" height="32" viewBox="0 0 30 32"><rect x=".7" y=".7" width="28.600" height="24" fill="#f2f3f5" stroke="#334" stroke-width="1.300"/><rect x="3.500" y="3.500" width="23" height="18" fill="#97b6dc" stroke="#2a4a80"/><path fill="#c8cbd0" stroke="#667" d="M12 25h6v3h5v3H7v-3h5z"/></svg>
      <i class="caret cn m5"></i>
      <svg class="m15" width="29" height="30" viewBox="0 0 29 30"><rect x=".5" y=".5" width="28" height="29" fill="url(#gDark)" stroke="#333"/><path stroke="#fff" stroke-width="1.100" opacity=".85" d="M5 0v30M10 0v30M15 0v30M20 0v30M25 0v30M0 5h29M0 10h29M0 15h29M0 20h29M0 25h29"/></svg>
      <i class="caret cn m6"></i>
      <svg class="m15" width="29" height="26" viewBox="0 0 29 26"><rect x=".7" y=".7" width="27.600" height="24.600" fill="#e9edf3" stroke="#335a8e" stroke-width="1.400"/><path stroke="#335a8e" stroke-width="1.400" d="M14.500 0v26M0 13h29"/><path fill="#8fb2dc" d="M3 3h9v8H3zM17 3h9v8h-9zM3 15h9v8H3zM17 15h9v8h-9z"/></svg>
      <i class="caret cn m6"></i>
    </div>
  </section>

  <div class="splitter"></div>

  <footer class="timeline">
    <div class="controls">
      <svg width="22" height="24" viewBox="0 0 22 24"><path fill="#666" d="M0 0h4v24H0zM6 12 22 0v24z"/></svg>
      <svg class="m27" width="25" height="24" viewBox="0 0 25 24"><path fill="#666" d="M0 12 16 0v24zM19 6h5v12h-5z"/></svg>
      <svg class="m26" width="24" height="30"><use href="#i-fwd"/></svg>
      <svg class="m24" width="26" height="24" viewBox="0 0 26 24"><path fill="#666" d="M0 6h4v12H0zM10 0l16 12-16 12z"/></svg>
      <svg class="m26" width="22" height="24" viewBox="0 0 22 24"><path fill="#666" d="M18 0h4v24h-4zM0 0l16 12L0 24z"/></svg>
    </div>
    <div class="track">
      <div class="steps">
        <svg width="32" height="32"><use href="#i-sketchpen"/></svg>
        <svg width="32" height="32"><use href="#i-extrude"/></svg>
        <svg width="32" height="32"><use href="#i-fillet"/></svg>
        <svg width="32" height="32"><use href="#i-fillet"/></svg>
        <svg width="32" height="32"><use href="#i-hole"/></svg>
      </div>
      <div class="bracket"><i></i><i></i><i></i><i></i></div>
      <svg class="marker" width="24" height="64" viewBox="0 0 24 64"><path fill="#666" d="M0 0h24v8L14 22v42h-4V22L0 8z"/></svg>
    </div>
    <svg class="tgear" width="30" height="30"><use href="#i-gear"/></svg>
  </footer>
</main>
</body>
</html>
```
FILE: styles.css
```css
* { box-sizing: border-box; }
html, body { margin: 0; padding: 0; }
body {
  width: 2456px; height: 1742px; position: relative; overflow: hidden;
  background: #111;
  font-family: "DejaVu Sans", "Noto Sans CJK SC", sans-serif;
  color: #333;
}
i { display: block; font-style: normal; }
svg { display: block; flex: none; overflow: visible; }
.sprite { position: absolute; }

/* desktop behind the window */
.desk-top { position: absolute; left: 0; top: 0; width: 100%; height: 168px; background: linear-gradient(#ebeae6, #e4e3de); }
.desk-other { position: absolute; left: 340px; top: 27px; width: 1990px; height: 6px; background: #a8a8a4; }
.desk-bump { position: absolute; left: 1307px; top: 16px; width: 79px; height: 14px; background: #d3d2ce; border-radius: 8px 8px 0 0; }
.desk-mark { position: absolute; left: 1716px; top: 25px; width: 36px; height: 5px; background: #8b8b89; }
.desk-outline { position: absolute; left: 2137px; top: 16px; width: 330px; height: 30px; border: 2px solid #d6d5d1; border-radius: 14px 0 0 0; }
.left-line { position: absolute; left: 0; top: 233px; width: 30px; height: 2px; background: #262626; }
.left-hi { position: absolute; left: 0; top: 526px; width: 30px; height: 44px; background: #2f2f35; }
.left-dots { position: absolute; left: 6px; top: 268px; display: flex; gap: 6px; }
.left-dots i { width: 4px; height: 5px; background: #bbb; border-radius: 2px; }
.left-ho { position: absolute; left: 0; top: 1588px; width: 30px; overflow: hidden; font: 30px "Liberation Sans", sans-serif; color: #ccc; }
.blue-line { position: absolute; left: 647px; top: 1720px; width: 120px; height: 2px; background: #2a5fb0; }
.right-dark-tab { position: absolute; left: 2430px; top: 323px; width: 26px; height: 95px; background: #3a3a3a; border-top: 13px solid #e6e6e6; border-bottom: 5px solid #d23b22; overflow: hidden; box-shadow: inset 0 2px 0 #d9512f; }
.ent { display: block; margin: 16px 0 0 0; font: 22px "Liberation Sans", sans-serif; color: #e4e4e4; white-space: nowrap; }
.right-panel { position: absolute; left: 2430px; top: 418px; width: 26px; height: 801px; background: linear-gradient(90deg, #d8d8d8, #ececec); }
.slash { width: 4px; height: 18px; margin: 32px 0 0 6px; background: #333; transform: rotate(42deg); border-radius: 2px; }
.right-panel2 { position: absolute; left: 2430px; top: 1309px; width: 26px; height: 349px; background: linear-gradient(#eee 0, #eee 88px, #9db6d2 88px, #9db6d2 90px, #e2e2e2 90px); display: flex; flex-direction: column; overflow: hidden; }
.curly { font-size: 13px; font-family: "DejaVu Sans", sans-serif; color: #444; margin-top: 12px; white-space: nowrap; letter-spacing: -1px; }
.chev { margin: 14px 0 0 8px; }

/* window */
.window {
  position: absolute; left: 30px; top: 29px; width: 2400px; height: 1681px;
  display: flex; flex-direction: column;
  border-radius: 20px; overflow: hidden; background: #f1f1f1;
}
.titlebar { height: 57px; flex: none; display: grid; grid-template-columns: 1fr auto 1fr; align-items: center; background: #f6f5f1; border-bottom: 2px solid #a8a8a8; }
.lights { display: flex; gap: 16px; padding-left: 16px; }
.tl { width: 24px; height: 24px; border-radius: 50%; border: 1px solid rgba(0,0,0,.08); }
.red { background: #ee6a5f; } .amber { background: #f5bd4f; } .green { background: #61c554; }
.title { margin: 0 0 2px; font: 600 26.700px "Noto Sans", "Noto Sans CJK SC", sans-serif; color: #3f3f3f; white-space: nowrap; }

.tabbar { height: 64px; flex: none; display: flex; align-items: center; background: #c9c9c9; }
.m5{margin-left:5px}.m6{margin-left:6px}.m8{margin-left:8px}.m10{margin-left:10px}.m11{margin-left:11px}.m12{margin-left:12px}.m13{margin-left:13px}.m14{margin-left:14px}.m15{margin-left:15px}.m18{margin-left:18px}.m21{margin-left:21px}.m23{margin-left:23px}.m24{margin-left:24px}.m26{margin-left:26px}.m27{margin-left:27px}.m34{margin-left:34px}.m36{margin-left:36px}.m37{margin-left:37px}.m39{margin-left:39px}.m46{margin-left:46px}.m56{margin-left:56px}
.caret { width: 0; height: 0; border-left: 6px solid transparent; border-right: 6px solid transparent; border-top: 10px solid #333; flex: none; }
.cq { border-left-width: 7.5px; border-right-width: 7.5px; border-top: 12px solid #666; }
.cq-dim { border-top-color: #999; }
.cn { border-top-width: 9px; }
.tab-home { align-self: flex-end; width: 78px; height: 56px; background: #b8b8b8; border-radius: 8px 8px 0 0; display: flex; align-items: center; justify-content: center; padding-top: 8px; }
.tab-file { align-self: flex-end; width: 1442px; height: 56px; background: #f2f2f2; border-radius: 8px 8px 0 0; display: flex; align-items: center; padding: 0 14px 0 630px; }
.tab-name { margin-left: 10px; font: 25px "Noto Sans", sans-serif; color: #444; white-space: nowrap; }
.tab-close { margin-left: auto; }
.tab-plus { align-self: flex-end; width: 56px; height: 56px; background: #b8b8b8; border-radius: 8px 8px 0 0; display: flex; align-items: center; justify-content: center; }
.hist { margin-left: 6px; font: 24px "Noto Sans", sans-serif; color: #444; }
.avatar { width: 50px; height: 50px; border-radius: 50%; background: #f0f0f0; display: flex; align-items: center; justify-content: center; font-size: 23px; color: #333; white-space: nowrap; font-family: "Noto Sans CJK SC", sans-serif; }

/* ribbon */
.ribbon { height: 170px; flex: none; display: flex; background: #f2f2f2; }
.design { width: 220px; height: 122px; margin: 22px 0 0 23px; padding-bottom: 5px; border: 2px solid #cfcfcf; border-radius: 8px; display: flex; align-items: center; justify-content: center; gap: 8px; font: 500 21.500px "Noto Sans CJK SC", sans-serif; color: #333; }
.ribbon-main { margin-left: 18px; display: flex; flex-direction: column; }
.tabs { height: 47px; display: flex; gap: 45px; padding-left: 16px; }
.rtab { padding: 0 24px; height: 47px; font: 21.500px/42px "Noto Sans CJK SC", sans-serif; color: #3a3a3a; white-space: nowrap; }
.rtab.on { color: #0a96d8; border-bottom: 6px solid #0a96d8; }
.groups { display: flex; margin-top: 6px; height: 102px; }
.group { display: flex; flex-direction: column; align-items: center; height: 102px; border-right: 2px solid #cfcfcf; }
.group.g8 { border-right: 0; }
.g1 { padding: 0 7px 0 3px; }
.g2 { padding: 0 7px 0 13px; }
.g3 { padding: 0 6px 0 13px; }
.g4 { padding: 0 9px 0 13px; }
.g5 { padding: 0 15px; }
.g6 { padding: 0 15px; }
.g7 { padding: 0 7px 0 13px; }
.g8 { padding: 0 0 0 15px; }
.tools { display: flex; height: 64px; margin-top: 1px; }
.tool { width: 86px; height: 64px; display: flex; align-items: flex-start; justify-content: center; }
.tool-measure { padding-top: 16px; }
.tool-image { padding-top: 3px; }
.tool-select { margin-top: -6px; height: 76px; }
.glabel { display: flex; align-items: center; gap: 5px; height: 28px; margin-top: 9px; font: 21.500px "Noto Sans CJK SC", sans-serif; color: #333; white-space: nowrap; }
.glabel.shift { padding-right: 10px; }

/* viewport */
.viewport { flex: 1; min-height: 0; position: relative; overflow: hidden; background: #fff; }
.scene { position: absolute; left: 0; top: 0; }
.thru { mix-blend-mode: multiply; opacity: .42; }
.cube-text { font: 50px "Noto Sans CJK SC", sans-serif; fill: #9a9a9a; text-anchor: middle; }
.axis-z { font: 700 27px "Liberation Sans", sans-serif; fill: #8a8aff; text-anchor: middle; }

.left { position: absolute; left: 8px; top: 8px; bottom: 9px; width: 598px; display: flex; flex-direction: column; justify-content: space-between; }
.panel { height: 48px; background: #f1f1f1; border: 2px solid #cfcfcf; display: flex; align-items: center; padding: 0 21px 0 9px; flex: none; }
.panel-t { margin: 0 0 2px 20px; font: 21.500px "Noto Sans CJK SC", sans-serif; color: #666; }
.panel-t.nomark { margin-left: 39px; }
.pc { margin-left: auto; }
.tree { flex: 1; padding-top: 9px; }
.row { height: 48px; display: flex; align-items: center; }
.l0 { padding-left: 37px; } .l1 { padding-left: 73px; } .l2 { padding-left: 73px; }
.tw { width: 14px; height: 14px; margin-right: 21px; background: linear-gradient(135deg, #ddd 20%, #000 80%); clip-path: polygon(100% 0, 100% 100%, 0 100%); flex: none; border: 0; }
.l2 .tw { margin-left: 0; margin-right: 57px; }
.tw.none { visibility: hidden; }
.pill { height: 40px; background: #f2f2f2; display: flex; align-items: center; padding: 0 18px 0 6px; font-size: 21.500px; color: #333; white-space: nowrap; }
.p7 { padding-left: 7px; }
.w108 { width: 108px; padding-right: 0; }
.w150 { width: 150px; padding-right: 0; }
.w166 { width: 166px; padding-right: 0; }
.t { display: block; line-height: 40px; }
.t27 { margin-left: 27px; } .t28 { margin-left: 28px; } .t29 { margin-left: 29px; } .t30 { margin-left: 30px; } .t31 { margin-left: 31px; }
.next { margin-left: 18px; }
.eye { color: #999; }
.eye.dim { color: #d6d6d6; }
.gear { color: #6e6e6e; }
.p-root { width: 296px; padding-right: 0; }
.root-box { width: 196px; height: 32px; margin-left: 12px; background: #999; display: flex; align-items: center; padding-left: 9px; }
.root-t { margin-left: 30px; font-weight: 700; font-size: 20px; color: #fff; }
.radio { margin-left: 9px; }
.p-sel { padding-right: 0; }
.sel { margin-left: 12px; width: 140px; height: 40px; background: #0a96d8; display: flex; align-items: center; padding-left: 8px; }
.white { color: #fff; }

.navbar { position: absolute; left: 964px; bottom: 12px; width: 473px; height: 48px; background: #f1f1f1; display: flex; align-items: center; padding-left: 8px; }

.splitter { height: 6px; flex: none; background: #d4d4d4; border-top: 2px solid #c9c9c9; }
.timeline { height: 94px; flex: none; display: flex; align-items: center; background: #f1f1f1; padding: 0 28px 0 22px; }
.controls { display: flex; align-items: center; }
.track { position: relative; align-self: flex-start; margin: 30px 0 0 48px; }
.steps { display: flex; gap: 16px; height: 32px; }
.bracket { display: flex; width: 196px; height: 14px; margin: 6px 0 0 16px; border-bottom: 4px solid #ccc; border-right: 4px solid #ccc; }
.bracket i { flex: 1; border-left: 4px solid #ccc; }
.marker { position: absolute; left: 220px; top: -12px; }
.tgear { margin-left: auto; color: #808080; }
```
